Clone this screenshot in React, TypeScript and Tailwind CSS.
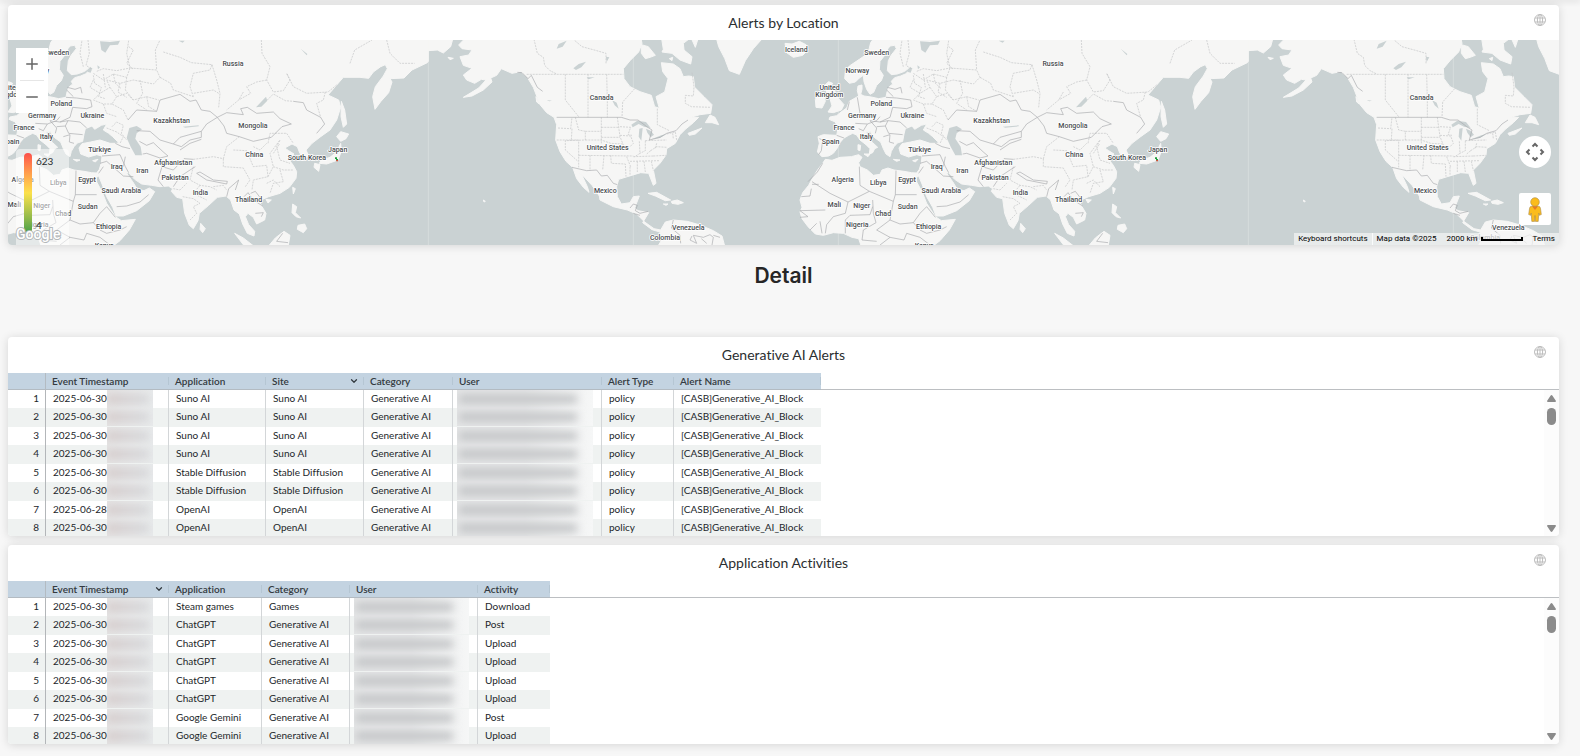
import { ChevronDown, Minus, Plus } from 'lucide-react';

const alertRows = [
  ['2025-06-30', 'Suno AI'],
  ['2025-06-30', 'Suno AI'],
  ['2025-06-30', 'Suno AI'],
  ['2025-06-30', 'Suno AI'],
  ['2025-06-30', 'Stable Diffusion'],
  ['2025-06-30', 'Stable Diffusion'],
  ['2025-06-28', 'OpenAI'],
  ['2025-06-30', 'OpenAI'],
];

const activityRows = [
  ['Steam games', 'Games', 'Download'],
  ['ChatGPT', 'Generative AI', 'Post'],
  ['ChatGPT', 'Generative AI', 'Upload'],
  ['ChatGPT', 'Generative AI', 'Upload'],
  ['ChatGPT', 'Generative AI', 'Upload'],
  ['ChatGPT', 'Generative AI', 'Upload'],
  ['Google Gemini', 'Generative AI', 'Post'],
  ['Google Gemini', 'Generative AI', 'Upload'],
];

// Europe, Africa and Asia
const eastLand = [
  'M285 110L272 128L264 160L238 178L208 198L196 215L194 236L208 250L226 246L238 234L250 226L252 245L260 268L270 283L281 277L290 256L304 242L310 226L298 208L300 184L314 166L324 146L330 138L344 136L349 146L334 165L325 182L322 212L334 224L352 222L374 214L392 200L400 206L388 212L376 222L362 228L344 233L334 244L338 252L326 262L320 280L318 292L296 296L274 291L252 288L242 283L246 268L246 255L234 258L232 272L236 288L222 296L208 304L200 324L186 334L170 347L150 351L147 358L166 366L174 386L170 406L130 404L114 410L118 430L112 456L126 470L146 468L160 460L172 444L178 430L192 414L206 406L218 400L230 405L240 420L258 434L270 446L268 462L278 458L284 446L293 442L278 428L262 410L258 396L270 394L285 414L302 426L310 446L318 462L330 470L334 454L342 440L352 429L368 424L372 402L376 386L396 378L404 388L424 376L440 372L430 390L446 400L458 410L472 424L476 430L450 430L420 420L392 426L366 431L357 444L362 462L386 471L410 464L426 468L424 488L418 508L410 519L394 518L372 514L342 510L324 504L306 510L300 523L280 526L262 510L240 500L236 488L246 472L236 464L214 470L180 472L156 481L136 478L128 490L114 508L100 530L86 556L68 578L60 600L66 622L60 636L66 656L84 680L106 702L130 706L160 698L190 700L216 712L236 716L246 745L450 745L480 722L508 690L526 658L484 662L466 650L440 610L426 575L410 546L409 532L416 528L426 552L440 590L458 622L468 648L490 648L530 632L568 602L584 575L568 564L552 572L532 568L518 545L500 520L506 518L524 538L545 552L575 556L600 560L625 558L638 566L634 574L650 592L668 596L674 640L688 676L700 686L714 662L718 640L746 616L772 592L798 588L812 600L822 630L838 642L848 672L862 700L882 708L884 694L866 674L856 650L864 640L880 652L890 672L914 660L918 640L906 620L898 602L926 590L960 580L988 562L1008 535L1010 515L1000 496L986 478L1002 462L986 452L974 444L996 432L1012 440L1018 456L1030 478L1046 468L1038 450L1056 430L1082 410L1110 390L1130 360L1142 322L1136 300L1104 285L1130 255L1150 232L1200 232L1226 235L1240 216L1262 200L1276 194L1282 206L1270 228L1246 260L1238 290L1245 328L1262 305L1286 278L1296 246L1290 236L1332 234L1356 210L1402 188L1405 184L1405 110Z',
  'M146 245L158 250L150 262L166 275L176 296L192 314L184 330L160 338L144 336L156 318L150 296L140 276L134 256Z',
  'M114 284L132 285L136 304L126 324L108 322L106 298Z',
  'M1142 395L1166 402L1158 416L1142 424L1130 410Z',
  'M1142 430L1144 454L1134 480L1100 492L1078 490L1084 480L1110 472L1130 456Z',
  'M1064 490L1080 494L1076 514L1062 502Z',
  'M1144 304L1154 330L1160 372L1150 382L1143 350Z',
  'M998 562L1006 566L1000 582Z',
  'M918 598L934 600L924 609Z',
  'M998 612L1010 620L1006 638L1022 654L1008 650L996 638Z',
  'M1014 676L1034 672L1040 686L1030 698L1012 688Z',
  'M924 740L946 714L972 694L990 706L984 740Z',
  'M824 700L850 714L886 742L856 742Z',
  'M722 670L736 686L728 698L720 688Z',
  'M252 462L270 462L264 470Z',
  'M234 434L242 436L240 452L234 450Z',
  'M340 478L360 480L350 484Z',
  'M398 482L414 478L406 486Z',
];

const eastWater = [
  'M508 384L530 378L546 388L530 400L526 416L542 440L546 466L526 466L512 440L500 414Z',
  'M420 124L450 126L480 122L474 134L450 136L436 158L424 150Z',
  'M384 206L396 208L392 218L384 216Z',
  'M412 196L420 202L414 208Z',
  'M668 380L716 376L716 379L676 383Z',
  'M918 290L922 302L904 320L888 322Z',
  'M1022 146L1042 162L1040 166Z',
  'M656 122L674 122L668 128Z',
];

const eastBorders =
  'M322 262L345 268L362 262L366 280M318 292L350 294L392 300L396 320L380 326L338 322M320 270L340 290M208 305L202 330M232 292L240 340M338 322L330 352L300 366L270 362M226 370L262 372L290 362L300 350M262 372L250 392L236 386M290 380L316 378L326 400L368 404M270 362L290 384L286 400M316 378L324 362L360 366L380 384M310 410L330 404L328 426L342 430M300 366L324 362M118 416L128 420L124 452L116 464M170 406L192 414M504 360L530 330L590 334L600 300L660 283L690 304L708 300L724 330L750 334L772 352L740 372L724 394L660 412L640 432L600 420L570 394L530 392M772 352L800 338L850 344L842 326L862 322L890 340L940 336L960 356L994 372L966 380L934 412L880 424L838 410L800 400L792 378L772 352M1000 304L1030 308L1040 330L1082 352L1094 372L1070 400M538 424L560 436L580 428L610 456L624 468M640 432L664 440L690 420L724 412L724 394M660 450L690 430L724 418M624 468L600 474L560 460L548 462M496 470L490 500M466 430L486 440L510 446M426 468L480 464L496 500L506 518M420 490L440 484L490 528L520 530M470 620L500 618L540 606L566 584M416 520L430 500M600 474L606 500L594 540L610 560M606 500L640 510L672 476L700 478M640 560L660 530L690 510L706 500M710 520L740 540L800 552L802 544L760 540L720 516ZM800 590L806 566L836 540L826 570M852 590L864 578L880 600L908 618M872 580L886 574L906 600M886 640L910 638L904 650M128 490L112 516L84 545M96 553L116 553M64 590L90 588L94 566M96 545L150 580L204 606L268 574L240 556L238 500M268 574L340 604L346 584L410 584M348 512L346 584M136 630L60 632L84 650L60 652M204 606L196 640L160 650L140 674L136 700M278 620L270 644L210 646L196 660L196 700M278 600L280 640L288 668L250 690L246 720L290 724M340 604L330 660L290 690L330 712L300 735M330 660L360 672L400 668L420 640L440 620L466 652M400 668L420 690L440 700L480 690L500 680M110 670L90 690M120 664L126 700M380 700L372 720L330 712M380 700L420 712L450 735M968 700L950 724L984 728';

const eastRegions =
  'M384 120L388 160L378 196L396 208M506 122L500 160L510 204L470 212L430 206L410 214M506 140L520 150L500 190L520 208M400 220L430 240L460 222L500 232L510 204L590 210L586 150L600 120M400 240L390 262L420 280L450 262L440 240L480 250L520 240L580 252L600 232L590 210M450 262L470 290L500 280L520 300L560 290L596 300M470 290L456 312L490 330L504 360M420 280L400 300L430 312L456 312M500 232L496 270L520 300M540 240L548 280L530 310L560 330M600 232L632 250L640 270L700 290M610 156L660 172L694 188L756 194L750 210L700 220L690 260L700 290M756 194L770 240L780 280L776 322M904 120L906 160L930 200L920 240L940 276L970 272L990 240L980 220L1000 260L1040 280L1104 276L1130 255M776 280L760 270L700 280M850 276L836 300L800 330M920 240L890 246L860 260L872 280L836 300M922 300L940 282L976 302L1000 304M1096 276L1090 300L1070 310L1082 352M1170 190L1184 150L1236 120M1280 120L1290 160L1320 190L1364 190M700 478L760 470L790 476L800 440L838 410M790 476L790 500L850 504L870 540L856 560M820 450L860 452L880 500L920 496L924 530L880 540L876 570M924 530L940 500L930 460L960 420L950 440L960 480L990 490M940 500L970 510L1000 510M920 550L940 540L960 560M880 440L900 450L920 430M940 460L960 430M960 510L970 545L940 550L930 580M924 430L930 400L980 400L1000 430M700 500L690 540L720 556L750 560L770 570M668 590L700 596L720 610L700 620L710 640L690 660M720 556L700 580L720 590L740 600M760 560L790 556L800 570M640 566L660 570L680 550M400 226L404 250L424 262L416 290L436 296M430 222L436 262M460 222L466 250L484 266M480 250L474 276L500 292M430 312L440 340L470 350M456 380L470 366L490 376L484 400L500 420M440 384L470 396L490 410L480 430M370 200L360 160L366 120M560 290L566 320L590 334';

// North America, Greenland and Iceland
const westLand = [
  'M85 110L85 152L112 150L130 159L152 140L158 118L158 110Z',
  'M200 110L176 135L186 146L216 150L206 165L180 170L190 196L216 205L190 225L200 240L224 250L244 238L258 240L236 264L210 280L190 292L216 288L250 270L276 246L272 234L290 226L304 206L336 220L362 215L382 232L400 262L410 288L420 314L440 338L462 352L470 374L467 420L480 455L498 484L518 502L530 536L550 562L567 577L562 560L546 526L532 512L552 530L576 556L598 588L600 600L640 620L682 630L710 642L734 666L762 686L782 690L796 666L820 660L862 664L900 675L940 692L966 708L976 745L770 745L786 718L780 696L756 689L728 668L746 638L714 632L704 624L718 588L700 590L690 608L664 612L652 590L650 560L656 538L682 530L722 518L746 520L760 556L768 550L760 510L780 490L798 465L800 446L826 430L840 404L856 388L880 368L896 352L872 352L900 344L932 340L936 314L912 290L884 262L880 230L866 228L850 230L840 206L820 192L784 188L788 215L804 236L794 276L768 290L778 325L764 320L754 286L720 275L690 260L672 236L670 206L690 182L716 156L726 130L722 110Z',
  'M930 345L945 352L956 374L936 368L916 368Z',
  'M864 400L906 384L886 402L868 406Z',
  'M784 110L876 110L850 130L852 150L876 170L872 192L840 180L816 160L786 156L790 148Z',
  'M724 134L745 140L766 166L750 172L736 176L724 160Z',
  'M872 110L896 110L886 142Z',
  'M808 176L818 172L816 182Z',
  'M948 110L956 140L974 175L988 212L1018 223L1036 182L1060 146L1092 110Z',
  'M1155 130L1176 132L1198 124L1218 134L1224 150L1208 166L1180 172L1160 158Z',
  'M744 580L770 577L812 600L796 602L766 588Z',
  'M814 604L832 600L850 608L834 613L816 610Z',
  'M790 612L804 612L798 616Z',
  'M144 172L160 175L150 179Z',
  'M250 600L256 604L252 606Z',
  'M408 290L418 312L410 306Z',
];

const westWater = [
  'M520 205L536 192L558 185L544 202L528 210Z',
  'M476 132L500 122L488 140L470 146Z',
  'M636 300L650 308L656 326L644 316Z',
  'M694 374L712 362L738 366L752 384L732 380L716 372L698 382Z',
  'M718 386L728 384L724 422L716 410Z',
  'M738 386L752 392L762 404L752 412L742 398Z',
  'M754 418L784 406L800 402L780 414Z',
  'M560 232L584 232L566 238Z',
  'M618 170L628 172L620 186Z',
  'M440 300L456 302L448 304Z',
];

const westBorders =
  'M470 352L664 352L690 360L714 360L740 380L756 390L748 420L780 412L800 400L828 392L846 372L864 360M352 217L366 218L384 236L394 226L412 262L428 274M516 502L560 512L590 510L604 528L622 526L640 550L652 554M690 624L700 612L712 616L706 632L720 640L744 634M700 640L720 646M820 660L814 684L840 706L842 730M876 708L870 720L890 730L880 706L910 712L930 704L940 712L936 735M904 716L920 730M940 706L960 712';

const westRegions =
  'M402 118L412 160L430 172L434 196L450 212L470 222M380 223L670 223M496 223L496 300L536 350M564 223L564 352M620 223L622 300L622 352M618 190L618 160L590 152L546 140L520 118M704 266L668 306L666 352M772 326L772 374L808 392M876 218L882 260L880 288L856 286L856 310L874 320L932 322M474 384L512 386L516 352M516 386L514 420L470 420M526 352L536 390L556 394L556 420L496 422L496 450L534 484M556 394L604 394M604 352L604 430M604 382L656 382M604 412L660 412M652 352L660 410L672 440M514 420L536 420L536 502M536 466L700 468M570 466L570 512M556 420L604 420L632 430L668 432M612 466L608 510M632 466L634 490L676 492L678 530M660 380L692 382L684 404L696 406M660 406L692 408L700 430L690 440M700 470L760 468M690 484L780 482M690 500L690 524M712 484L712 516M732 484L736 516M754 484L760 512M680 470L692 500M718 424L720 460L704 470M736 422L736 452L720 460M736 422L800 420M752 452L770 440L800 442M752 452L740 462M770 430L766 446M800 402L826 396L830 420M760 468L798 466M818 400L820 416';

const eastLabels: [string, number, number][] = [
  ['Sweden', 290, 158],
  ['Norway', 232, 211],
  ['United', 149, 263],
  ['Kingdom', 148, 285],
  ['Poland', 304, 312],
  ['Germany', 246, 348],
  ['Ukraine', 397, 348],
  ['France', 192, 384],
  ['Italy', 259, 411],
  ['Spain', 152, 425],
  ['Russia', 819, 191],
  ['Kazakhstan', 635, 362],
  ['Mongolia', 879, 377],
  ['Türkiye', 419, 448],
  ['China', 883, 463],
  ['South Korea', 1041, 473],
  ['Japan', 1133, 449],
  ['Afghanistan', 640, 489],
  ['Iran', 547, 511],
  ['Iraq', 470, 499],
  ['Pakistan', 645, 532],
  ['India', 721, 578],
  ['Thailand', 866, 600],
  ['Algeria', 188, 538],
  ['Libya', 295, 547],
  ['Egypt', 381, 538],
  ['Saudi Arabia', 484, 573],
  ['Mali', 163, 614],
  ['Niger', 245, 617],
  ['Chad', 309, 642],
  ['Sudan', 383, 621],
  ['Nigeria', 232, 675],
  ['Ethiopia', 446, 679],
  ['Kenya', 433, 736],
];

const westLabels: [string, number, number][] = [
  ['Canada', 605, 292],
  ['United States', 623, 443],
  ['Mexico', 616, 571],
  ['Venezuela', 865, 684],
  ['Colombia', 795, 713],
  ['Iceland', 1189, 150],
];

type RegionProps = {
  land: string[];
  water: string[];
  borders: string;
  regions: string;
  labels: [string, number, number][];
};

function Region({ land, water, borders, regions, labels }: RegionProps) {
  return (
    <>
      <path d={land.join('')} fill="#f6f6f5" stroke="#f6f6f5" strokeWidth="3" strokeLinejoin="round" />
      <path d={water.join('')} fill="#cad2d3" />
      <path d={regions} fill="none" stroke="#c2c4c6" strokeWidth="2" strokeDasharray="6 3" strokeLinejoin="round" />
      <path d={borders} fill="none" stroke="#a9abad" strokeWidth="2" strokeLinejoin="round" />
      {labels.map(([name, x, y]) => (
        <text
          key={name}
          x={x}
          y={y + 7}
          textAnchor="middle"
          fontSize="21"
          fontWeight="500"
          fontFamily="Roboto, sans-serif"
          fill="#4a4d50"
          stroke="#ffffff"
          strokeWidth="5"
          strokeLinejoin="round"
          paintOrder="stroke"
        >
          {name}
        </text>
      ))}
    </>
  );
}

function World() {
  return (
    <>
      <g transform="translate(2340 0)">
        <Region land={eastLand} water={eastWater} borders={eastBorders} regions={eastRegions} labels={eastLabels} />
        <path d="M1125 472h6v5h-6zM1128 477h6v5h-6z" fill="#1f9d3a" />
        <path d="M1129 480h5v4h-5z" fill="#e0442e" />
      </g>
      <g transform="translate(3660 0)">
        <Region land={westLand} water={westWater} borders={westBorders} regions={westRegions} labels={westLabels} />
      </g>
    </>
  );
}

function GlobeIcon() {
  return (
    <svg viewBox="0 0 12 12" className="h-3 w-3" fill="none" stroke="#bdbdbd" strokeWidth="1">
      <circle cx="6" cy="6" r="5.5" />
      <ellipse cx="6" cy="6" rx="2.6" ry="5.5" />
      <path d="M6 .5v11M1 4h10M1 8h10" />
    </svg>
  );
}

function Card({ title, children }: { title: string; children: React.ReactNode }) {
  return (
    <section className="rounded bg-white shadow-[0_1px_10px_rgba(0,0,0,0.14)]">
      <header className="relative flex h-9 items-center justify-center">
        <h2 className="text-sm text-[#2b2e30]">{title}</h2>
        <button type="button" aria-label="Time zone" className="absolute top-[9px] right-[13px]">
          <GlobeIcon />
        </button>
      </header>
      {children}
    </section>
  );
}

function MapView() {
  return (
    <div className="relative -mt-px h-[205px] overflow-hidden rounded-b bg-[#cad2d3]">
      <svg viewBox="24 120 4653 615" preserveAspectRatio="xMidYMid slice" className="h-full w-full">
        <path d="M1285 120v615M1900 120v615M2515 120v615M3745 120v615M4360 120v615" stroke="#d6dcdd" strokeWidth="3" />
        <g transform="translate(-2460 0)">
          <World />
        </g>
        <World />
      </svg>

      {/* Zoom buttons */}
      <div className="absolute top-2 left-2 flex w-8 flex-col items-center bg-white text-[#666666]">
        <button type="button" aria-label="Zoom in" className="flex h-8 w-8 items-center justify-center">
          <Plus size={18} strokeWidth={2} />
        </button>
        <div className="h-px w-6 bg-[#e6e6e6]" />
        <button type="button" aria-label="Zoom out" className="flex h-8 w-8 items-center justify-center">
          <Minus size={18} strokeWidth={2} />
        </button>
      </div>

      {/* Legend */}
      <div className="absolute bottom-0 left-2 flex h-24 w-[53px] gap-1 rounded-t bg-white/50 pt-1 pl-2">
        <div className="h-20 w-2 rounded-sm bg-gradient-to-b from-[#fb4d4a] via-[#fbe14b] to-[#43a047]" />
        <div className="flex h-20 flex-col justify-between text-[10px] leading-4 text-[#2b2e30]">
          <span>623</span>
          <span>4</span>
        </div>
      </div>
      <svg viewBox="0 0 50 18" className="absolute bottom-0 left-[7px] h-[18px] w-[50px]">
        <text x="1" y="12" fontSize="14" fontWeight="500" fontFamily="Roboto, sans-serif" fill="#ffffff" stroke="#b4b8ba" strokeWidth="2" paintOrder="stroke">
          Google
        </text>
      </svg>

      {/* Camera and street view */}
      <button
        type="button"
        aria-label="Map camera controls"
        className="absolute right-2 bottom-[77px] flex h-8 w-8 items-center justify-center rounded-full bg-white"
      >
        <svg viewBox="0 0 20 20" className="h-5 w-5" fill="none" stroke="#666666" strokeWidth="2">
          <path d="M7.5 4.5L10 2l2.500 2.500M7.500 15.500L10 18l2.500-2.500M4.500 7.500L2 10l2.500 2.500M15.500 7.500L18 10l-2.500 2.500" />
        </svg>
      </button>
      <button
        type="button"
        aria-label="Street View"
        className="absolute right-2 bottom-5 flex h-8 w-8 items-center justify-center rounded-xs bg-white"
      >
        <svg viewBox="0 0 14 25" className="h-[25px] w-3.5" fill="#fbbc1c" stroke="#a98a4a" strokeWidth=".6">
          <path d="M3.200 9.200h7.600Q12.200 9.500 12.500 11.500L13.300 17.500L11.300 18.300L10.800 16L10.200 24.400H7.400L7 18.500L6.600 24.400H3.800L3.200 16L2.700 18.300L.700 17.500L1.500 11.500Q1.800 9.500 3.200 9.200Z" />
          <path d="M4 9.200h6L7 13z" fill="#e87b25" stroke="none" />
          <circle cx="7" cy="5" r="4.300" />
        </svg>
      </button>

      {/* Attribution */}
      <div className="absolute right-0 bottom-0 flex h-3 items-center bg-[#f5f5f5]/70 font-[Roboto,sans-serif] text-[8px] leading-3 text-black">
        <button type="button" className="border-r border-white/80 px-1">
          Keyboard shortcuts
        </button>
        <span className="px-1">Map data ©2025</span>
        <button type="button" className="flex items-center gap-[3px] pr-1 pl-1.5">
          2000 km
          <span className="h-1 w-[42px] border-x-2 border-b-2 border-black" />
        </button>
        <a href="#terms" className="pr-1 pl-1.5">
          Terms
        </a>
      </div>
    </div>
  );
}

// Masked value, drawn as a smudge
function Masked({ wide }: { wide?: boolean }) {
  return (
    <span
      aria-hidden="true"
      className={
        wide
          ? 'mr-2 ml-1 flex h-full flex-1 items-center overflow-hidden bg-gradient-to-r from-[#e4e5e6] via-[#e4e5e6] to-[#f6f7f7]'
          : 'flex h-full w-[46px] items-center overflow-hidden bg-gradient-to-r from-[#e4e3e3] to-[#e8eaeb]'
      }
    >
      <span
        className={
          wide
            ? 'mr-4 ml-0.5 h-2 flex-1 bg-[#c0c2c4] blur-[4px]'
            : 'mr-1 h-2 flex-1 bg-gradient-to-r from-[#d3c8c8] to-[#d4d6d9] blur-[4px]'
        }
      />
    </span>
  );
}

type Column = { name: string; width: string; sorted?: boolean };

function DataTable({ columns, rows }: { columns: Column[]; rows: React.ReactNode[][] }) {
  return (
    <div className="relative h-[163px] overflow-hidden rounded-b">
      <div className="absolute inset-x-0 top-4 h-px bg-[#bcbfc2]" />
      <table className="relative table-fixed border-separate border-spacing-0 text-[10px] text-[#22262a]">
        <thead>
          <tr className="h-[17px]">
            <th className="w-[38px] border-r border-b border-[#b3bbc2] bg-[#c3d3e1] p-0" />
            {columns.map((col) => (
              <th key={col.name} className={`${col.width} border-b border-[#b3bbc2] bg-[#c3d3e1] p-0 text-left font-semibold`}>
                <div className="flex h-2 items-center justify-between border-r border-[#b5c6d3] pr-1 pl-1.5 leading-4 text-[#333a40]">
                  {col.name}
                  {col.sorted && <ChevronDown size={10} strokeWidth={3} />}
                </div>
              </th>
            ))}
          </tr>
        </thead>
        <tbody>
          {rows.map((row, i) => (
            <tr key={i} className="h-[18px] even:h-[19px] even:bg-[#eff2f1]">
              <td className="border-r border-[#b3b6b9] p-0 pr-1.5 text-right align-top leading-4">{i + 1}</td>
              {row.map((cell, j) => (
                <td key={j} className="border-r border-[#d3d6d8] p-0 align-top leading-4 last:border-r-0">
                  {typeof cell === 'string' ? <div className="pl-[7px]">{cell}</div> : cell}
                </td>
              ))}
            </tr>
          ))}
        </tbody>
      </table>
      <div className="absolute top-[17px] right-0 bottom-0 flex w-[15px] flex-col items-center bg-[#fcfcfc] pt-[5px] pb-1">
        <svg viewBox="0 0 9 7" className="h-[7px] w-[9px]" fill="#8b8b8b">
          <path d="M4.500 0Q5 0 5.500.800L9 6Q9 7 8 7H1Q0 7 0 6L3.500.800Q4 0 4.500 0" />
        </svg>
        <div className="mt-1.5 h-[17px] w-[9px] rounded-full bg-[#8b8b8b]" />
        <svg viewBox="0 0 9 7" className="mt-auto h-[7px] w-[9px]" fill="#8b8b8b">
          <path d="M4.500 7Q5 7 5.500 6.200L9 1Q9 0 8 0H1Q0 0 0 1L3.500 6.200Q4 7 4.500 7" />
        </svg>
      </div>
    </div>
  );
}

function Timestamp({ date }: { date: string }) {
  return (
    <div className="flex h-[18px] items-start pl-[7px]">
      <span className="w-[54px] whitespace-nowrap">{date}</span>
      <Masked />
    </div>
  );
}

function User() {
  return (
    <div className="flex h-[18px]">
      <Masked wide />
    </div>
  );
}

export default function App() {
  return (
    <main className="min-h-screen bg-[#f7f7f7] pb-3 font-[Lato,sans-serif] [font-variant-ligatures:none]">
      <div className="h-0 shadow-[0_0_6px_1px_rgba(0,0,0,0.2)]" />
      <div className="pt-[5px] pr-[21px] pl-2">
        <Card title="Alerts by Location">
          <MapView />
        </Card>

        <h1 className="flex h-[92px] items-start justify-center pt-[17px] font-[Inter,sans-serif] text-[21px] leading-7 font-semibold text-[#262626]">
          Detail
        </h1>

        <div className="flex flex-col gap-[9px]">
          <Card title="Generative AI Alerts">
            <DataTable
              columns={[
                { name: 'Event Timestamp', width: 'w-[123px]' },
                { name: 'Application', width: 'w-[97px]' },
                { name: 'Site', width: 'w-[98px]', sorted: true },
                { name: 'Category', width: 'w-[89px]' },
                { name: 'User', width: 'w-[149px]' },
                { name: 'Alert Type', width: 'w-[72px]' },
                { name: 'Alert Name', width: 'w-[147px]' },
              ]}
              rows={alertRows.map(([date, app]) => [
                <Timestamp date={date} />,
                app,
                app,
                'Generative AI',
                <User />,
                'policy',
                '[CASB]Generative_AI_Block',
              ])}
            />
          </Card>

          <Card title="Application Activities">
            <DataTable
              columns={[
                { name: 'Event Timestamp', width: 'w-[123px]', sorted: true },
                { name: 'Application', width: 'w-[93px]' },
                { name: 'Category', width: 'w-[88px]' },
                { name: 'User', width: 'w-[128px]' },
                { name: 'Activity', width: 'w-[72px]' },
              ]}
              rows={activityRows.map(([app, category, activity]) => [
                <Timestamp date="2025-06-30" />,
                app,
                category,
                <User />,
                activity,
              ])}
            />
          </Card>
        </div>
      </div>
    </main>
  );
}
